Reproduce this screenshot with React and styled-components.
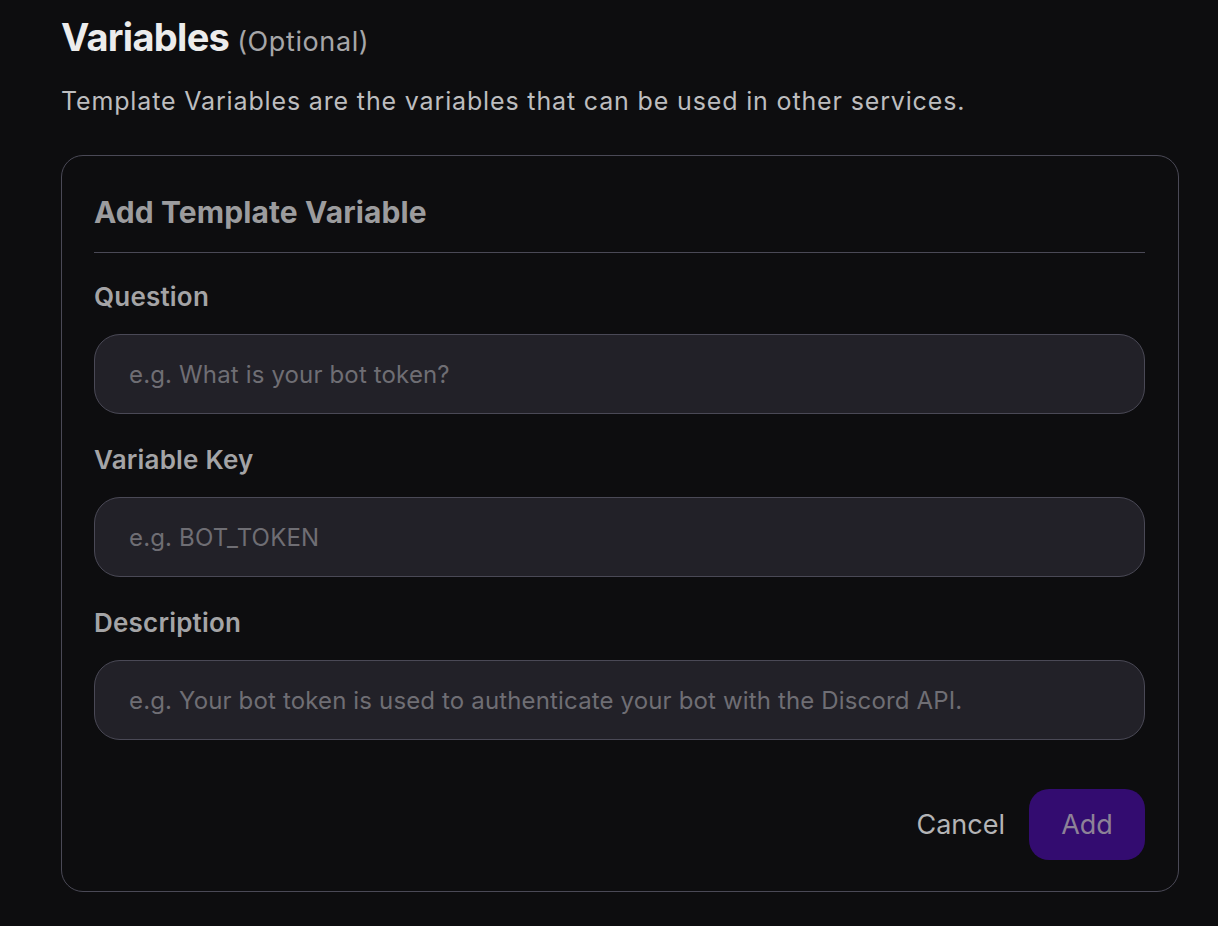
import React from "react";
import styled, { createGlobalStyle } from "styled-components";

const Global = createGlobalStyle`
  html, body { margin: 0; padding: 0; background: #0d0d0f; }
  body { font-family: Inter, "Noto Sans", sans-serif; -webkit-font-smoothing: antialiased; }
  * { box-sizing: border-box; }
`;

const Page = styled.div`
  width: 1218px;
  height: 926px;
  background: #0d0d0f;
  padding: 14px 39px 0 61px;
`;

const TitleRow = styled.h2`
  margin: 0;
  display: flex;
  align-items: baseline;
  gap: 8px;
  height: 50px;
`;

const Title = styled.span`
  font-size: 38px;
  font-weight: 700;
  color: #ececec;
  letter-spacing: -0.7px;
`;

const Optional = styled.span`
  font-size: 27px;
  font-weight: 400;
  color: #a6a6a8;
  letter-spacing: 0.6px;
`;

const Lead = styled.p`
  margin: 19px 0 0;
  font-size: 25px;
  line-height: 36px;
  color: #bdbdbf;
  letter-spacing: 0.85px;
`;

const Card = styled.div`
  margin-top: 36px;
  border: 1.5px solid #4a4956;
  border-radius: 22px;
  padding: 35px 33px 31px 32px;
  display: flex;
  flex-direction: column;
`;

const CardTitle = styled.h3`
  margin: 0;
  font-size: 30px;
  line-height: 42px;
  font-weight: 700;
  color: #9c9c9e;
  letter-spacing: 0.1px;
  padding-bottom: 19px;
  border-bottom: 1.5px solid #4a4956;
`;

const Field = styled.div`
  display: flex;
  flex-direction: column;
  gap: 22px;
  margin-top: ${(p) => p.$top}px;
`;

const Label = styled.label`
  font-size: 26px;
  line-height: 30px;
  font-weight: 600;
  color: #a4a4a6;
  letter-spacing: 0.2px;
`;

const Input = styled.input`
  height: 80px;
  width: 100%;
  border-radius: 26px;
  border: 1.5px solid #4a4956;
  background: #222128;
  padding: 0 34px;
  font-family: Inter, "Noto Sans", sans-serif;
  font-size: 24px;
  color: #ddd;
  outline: none;
  letter-spacing: 0.15px;
  &::placeholder { color: #6f6e74; }
`;

const Actions = styled.div`
  display: flex;
  justify-content: flex-end;
  align-items: center;
  gap: 24px;
  margin-top: 49px;
`;

const CancelButton = styled.button`
  background: none;
  border: none;
  padding: 0;
  font-family: Inter, "Noto Sans", sans-serif;
  font-size: 27px;
  color: #b4b4b6;
  cursor: pointer;
`;

const AddButton = styled.button`
  width: 116px;
  height: 71px;
  border: none;
  border-radius: 20px;
  background: #330c70;
  font-family: Inter, "Noto Sans", sans-serif;
  font-size: 27px;
  color: #8d8297;
  cursor: pointer;
`;

export default function App() {
  return (
    <>
      <Global />
      <Page>
        <TitleRow>
          <Title>Variables</Title>
          <Optional>(Optional)</Optional>
        </TitleRow>
        <Lead>Template Variables are the variables that can be used in other services.</Lead>
        <Card>
          <CardTitle>Add Template Variable</CardTitle>
          <Field $top={29}>
            <Label>Question</Label>
            <Input placeholder="e.g. What is your bot token?" />
          </Field>
          <Field $top={31}>
            <Label>Variable Key</Label>
            <Input placeholder="e.g. BOT_TOKEN" />
          </Field>
          <Field $top={31}>
            <Label>Description</Label>
            <Input placeholder="e.g. Your bot token is used to authenticate your bot with the Discord API." />
          </Field>
          <Actions>
            <CancelButton>Cancel</CancelButton>
            <AddButton>Add</AddButton>
          </Actions>
        </Card>
      </Page>
    </>
  );
}
